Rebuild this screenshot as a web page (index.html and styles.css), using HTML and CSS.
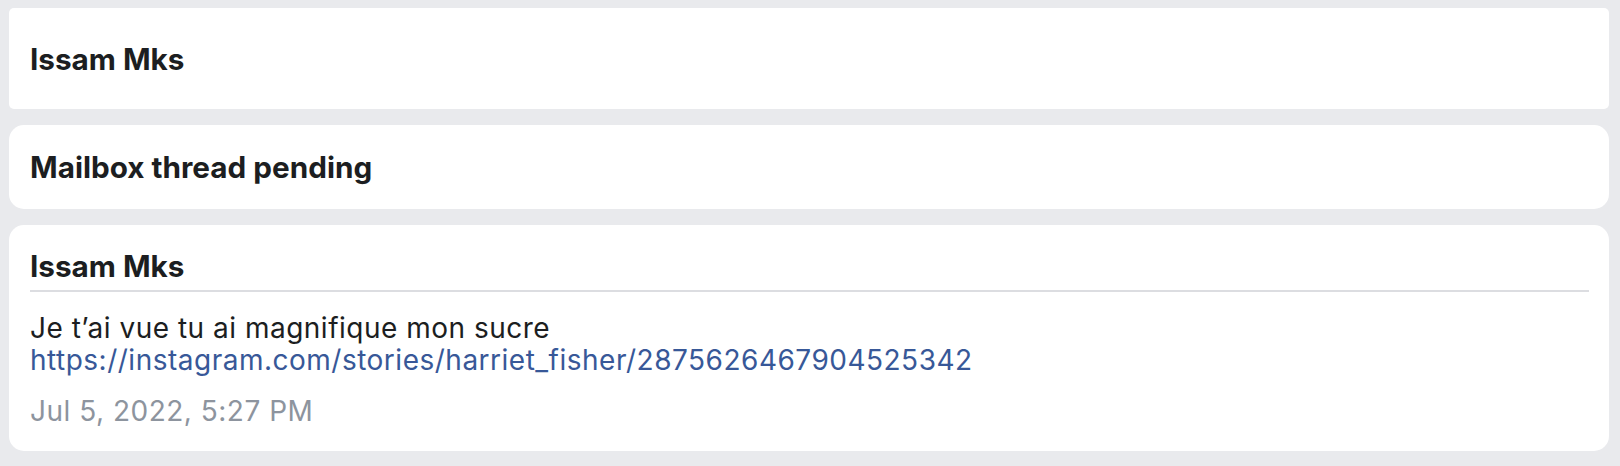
FILE: index.html
```html
<!DOCTYPE html>
<html lang="fr">
<head>
<meta charset="utf-8">
<title>Issam Mks</title>
<link rel="stylesheet" href="styles.css">
</head>
<body>
<main class="thread">
  <header class="card card-title">
    <h1 class="title">Issam Mks</h1>
  </header>
  <section class="card card-status">
    <h2 class="title">Mailbox thread pending</h2>
  </section>
  <article class="card card-message">
    <h3 class="title sender">Issam Mks</h3>
    <div class="message-body">
      <div>Je t’ai vue tu ai magnifique mon sucre</div>
      <div><a class="link" href="#">https://instagram.com/stories/harriet_fisher/2875626467904525342</a></div>
    </div>
    <div class="timestamp">Jul 5, 2022, 5:27 PM</div>
  </article>
</main>
</body>
</html>
```

FILE: styles.css
```css
html, body {
  margin: 0;
  padding: 0;
}
body {
  background: #e9eaed;
  font-family: Inter, "Liberation Sans", sans-serif;
  color: #1c1e21;
}
.thread {
  display: flex;
  flex-direction: column;
  gap: 16px;
  padding: 8px 11px 14px 9px;
}
.card {
  background: #ffffff;
  border-radius: 15px;
  padding: 0 21px;
}
.title {
  margin: 0;
  font-size: 29.7px;
  font-weight: 700;
  line-height: 34px;
  color: #1c1e21;
}
.card-title {
  height: 101px;
  border-radius: 5px;
  display: flex;
  align-items: center;
}
.card-status {
  height: 84px;
  display: flex;
  align-items: center;
}
.card-message {
  padding: 24px 20px 24px 21px;
}
.sender {
  padding-bottom: 7px;
  border-bottom: 2px solid #dcdde1;
}
.message-body {
  margin-top: 20px;
  font-size: 28px;
  letter-spacing: 0.5px;
  line-height: 32px;
}
.link {
  color: #385898;
  text-decoration: none;
}
.timestamp {
  margin-top: 19px;
  font-size: 28px;
  letter-spacing: 0.5px;
  line-height: 32px;
  color: #8d949e;
}
```
